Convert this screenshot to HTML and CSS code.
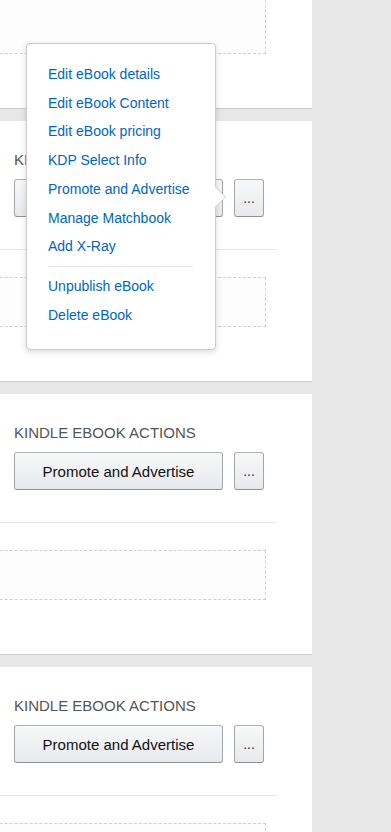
FILE: index.html
```html
<!DOCTYPE html>
<html lang="en">
  <head>
    <meta charset="UTF-8" />
    <meta name="viewport" content="width=device-width, initial-scale=1.0" />
    <title>Bookshelf</title>
    <link rel="stylesheet" href="styles.css">
  </head>
  <body>
    <div class="shelf">
      <!-- book 1 (scrolled past, only its drop area shows) -->
      <div class="panel panel-first">
        <div class="dropzone dropzone-tall"></div>
      </div>

      <!-- book 2 with open menu -->
      <div class="panel">
        <div class="actions">
          <div class="actions-title">KINDLE EBOOK ACTIONS</div>
          <div class="buttons">
            <button class="btn btn-main">Promote and Advertise</button>
            <button class="btn btn-more">...</button>
          </div>
        </div>
        <div class="divider"></div>
        <div class="dropzone"></div>
      </div>

      <!-- book 3 -->
      <div class="panel">
        <div class="actions">
          <div class="actions-title">KINDLE EBOOK ACTIONS</div>
          <div class="buttons">
            <button class="btn btn-main">Promote and Advertise</button>
            <button class="btn btn-more">...</button>
          </div>
        </div>
        <div class="divider"></div>
        <div class="dropzone"></div>
      </div>

      <!-- book 4 -->
      <div class="panel">
        <div class="actions">
          <div class="actions-title">KINDLE EBOOK ACTIONS</div>
          <div class="buttons">
            <button class="btn btn-main">Promote and Advertise</button>
            <button class="btn btn-more">...</button>
          </div>
        </div>
        <div class="divider"></div>
        <div class="dropzone"></div>
      </div>
    </div>

    <!-- popover menu for the "..." button -->
    <div class="popover">
      <ul class="menu">
        <li><a href="#">Edit eBook details</a></li>
        <li><a href="#">Edit eBook Content</a></li>
        <li><a href="#">Edit eBook pricing</a></li>
        <li><a href="#">KDP Select Info</a></li>
        <li><a href="#">Promote and Advertise</a></li>
        <li><a href="#">Manage Matchbook</a></li>
        <li><a href="#">Add X-Ray</a></li>
        <li class="menu-sep"></li>
        <li><a href="#">Unpublish eBook</a></li>
        <li><a href="#">Delete eBook</a></li>
      </ul>
    </div>
  </body>
</html>
```

FILE: styles.css
```css
*{
    padding: 0;
    margin: 0;
    box-sizing: border-box;
}
body{
    background: #e7e7e7;
    font-family: "Liberation Sans", Arial, sans-serif;
    overflow: hidden;
    height: 832px;
}
.shelf{
    width: 312px;
}
.panel{
    background: #fff;
    height: 261px;
    border-bottom: 1px solid #cdcdcd;
    margin-bottom: 12px;
    overflow: hidden;
}
.panel-first{
    height: 109px;
}
.actions{
    padding: 30px 0 0 14px;
}
.actions-title{
    font-size: 15px;
    line-height: 18px;
    color: #555;
}
.buttons{
    display: flex;
    gap: 11px;
    margin-top: 10px;
}
.btn{
    font-family: inherit;
    height: 38px;
    border: 1px solid #adb1b8;
    border-color: #adb1b8 #a2a6ac #8d9096;
    border-radius: 3px;
    background: linear-gradient(to bottom, #f7f8fa, #e7e9ec);
    color: #111;
    font-size: 15px;
    cursor: pointer;
}
.btn-main{
    width: 209px;
}
.btn-more{
    width: 30px;
    font-size: 14px;
    color: #333;
}
.divider{
    margin: 32px 0 0 -40px;
    width: 316px;
    height: 1px;
    background: #e7e7e7;
}
.dropzone{
    margin: 27px 0 0 -40px;
    width: 306px;
    height: 50px;
    border: 1px dashed #cfcfcf;
    background: #fdfdfd;
}
.dropzone-tall{
    margin-top: -16px;
    height: 70px;
}
.popover{
    position: absolute;
    left: 26px;
    top: 43px;
    width: 190px;
    height: 307px;
    background: #fff;
    border: 1px solid #cbcbcb;
    border-radius: 4px;
    box-shadow: 0 2px 6px rgba(0,0,0,0.15);
}
.popover::before,
.popover::after{
    content: "";
    position: absolute;
    top: 143px;
    border-style: solid;
    border-color: transparent;
}
.popover::before{
    right: -11px;
    border-width: 10px 0 10px 10px;
    border-left-color: #cbcbcb;
}
.popover::after{
    right: -10px;
    border-width: 10px 0 10px 10px;
    border-left-color: #fff;
}
.menu{
    list-style: none;
    padding: 16px 22px 0 21px;
}
.menu li{
    font-size: 14px;
    line-height: 28.7px;
}
.menu a{
    color: #0066c0;
    text-decoration: none;
}
.menu-sep{
    height: 1px;
    background: #e7e7e7;
    margin: 5px 0 5px 0;
}
```
